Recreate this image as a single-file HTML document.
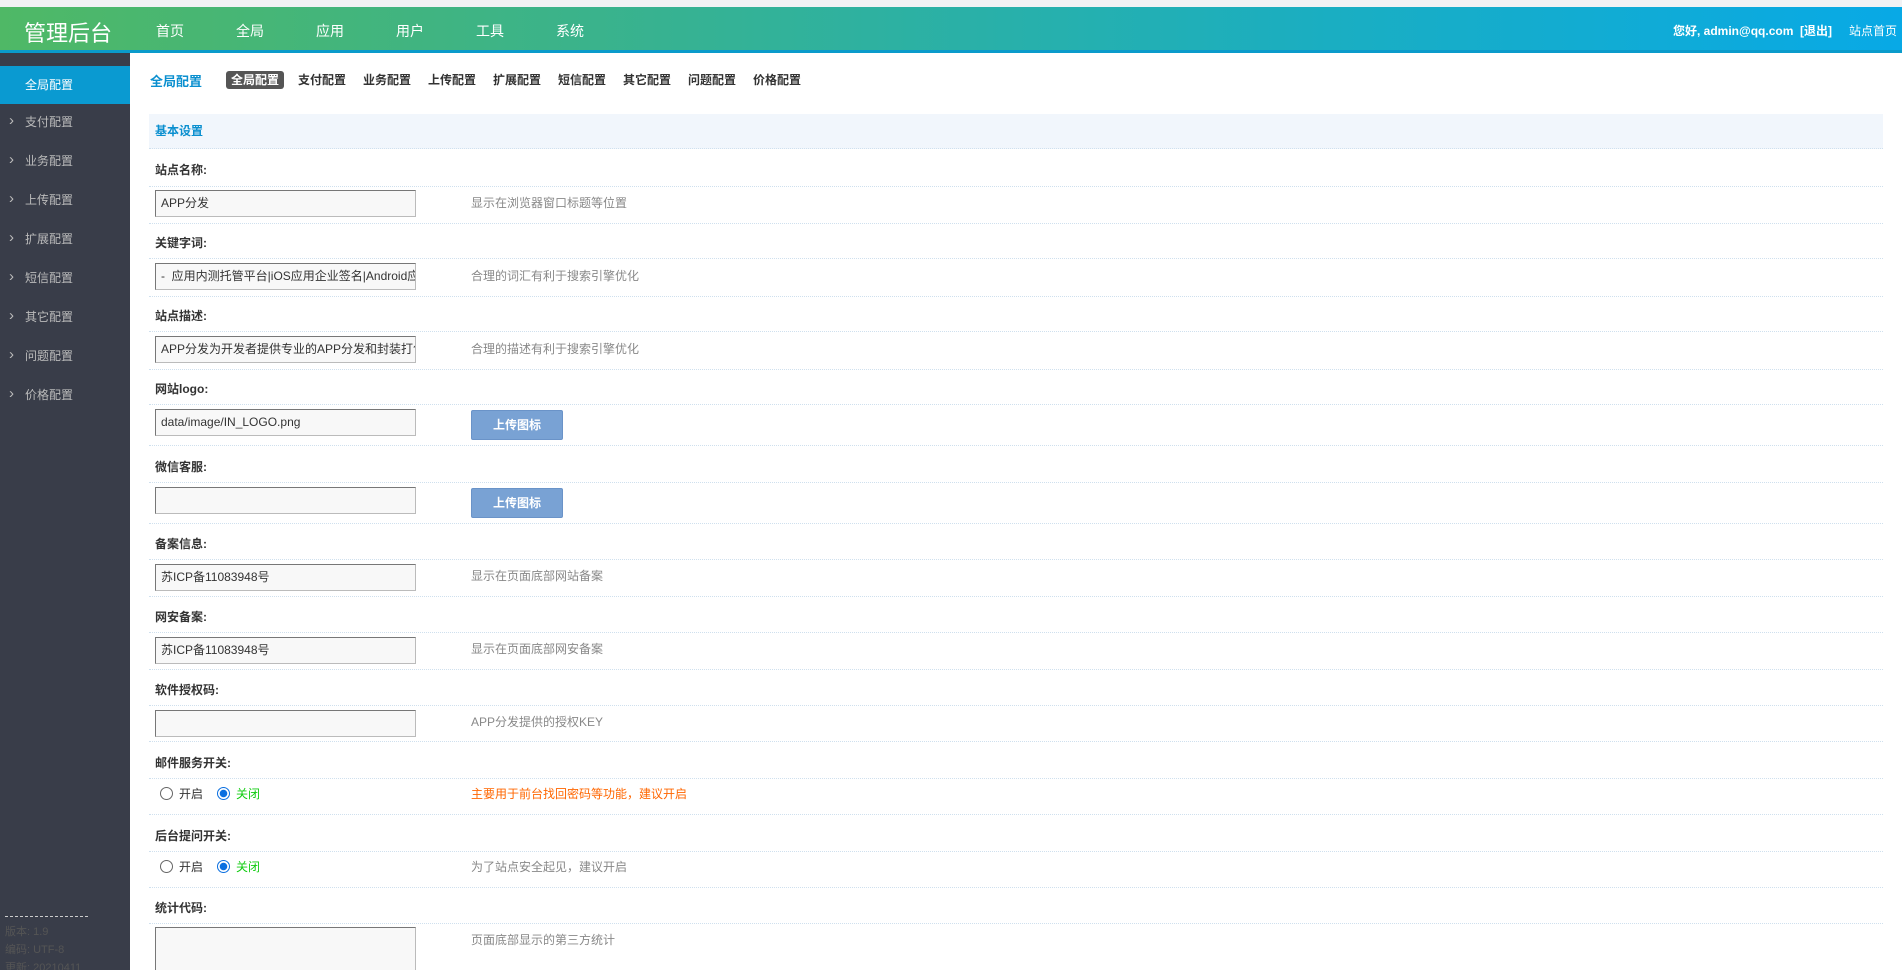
<!DOCTYPE html>
<html><head><meta charset="utf-8"><style>
*{margin:0;padding:0;box-sizing:border-box}
html{width:1902px;height:970px;overflow:hidden}
body{width:1902px;height:970px;overflow:hidden;background:#fff;font-family:"Liberation Sans","Noto Sans CJK SC",sans-serif;position:relative}
.a{position:absolute}
#top{left:0;top:0;width:1902px;height:7px;background:#f1f2f4}
#hdr{left:0;top:7px;width:1902px;height:46px;background:linear-gradient(90deg,#4fb866 0%,#3bb38a 30%,#1aaec2 70%,#08a9e6 100%);border-bottom:3px solid #0a9bcb}
#hdr .logo{position:absolute;left:24px;top:9px;font-size:22px;color:#fff}
#hdr .nav{position:absolute;top:14px;font-size:14px;color:#fff}
#hdr .r{position:absolute;top:15px;font-size:12px;color:#fff;font-weight:bold}
#side{left:0;top:53px;width:130px;height:917px;background:#393d49;overflow:hidden}
.si{position:absolute;left:0;width:130px;height:38px;line-height:38px;font-size:12px;color:#bbb;padding-left:25px}
.si i{position:absolute;left:9px;top:-1px;font-style:normal;color:#bbb;font-size:15px}
.act{background:#0a9ad1;color:#fff}
.ft{position:absolute;left:5px;font-size:11px;color:#555}
.tab{position:absolute;top:71px;font-size:12px;font-weight:bold;color:#333;height:18px;line-height:18px}
.lbl{position:absolute;left:155px;font-size:12px;font-weight:bold;color:#333}
.sep{position:absolute;left:149px;width:1734px;border-top:1px dotted #cfe0ee}
.inp{position:absolute;left:155px;width:261px;height:27px;background:#f8f8f8;border:1px solid #bbb;border-top-color:#777;border-left-color:#777;font-size:12px;color:#333;padding-left:5px;line-height:25px;white-space:nowrap;overflow:hidden}
.hint{position:absolute;left:471px;font-size:12px;color:#888}
.btn{position:absolute;left:471px;width:92px;height:30px;background:#79a2d4;border:1px solid #6a93c8;border-radius:2px;color:#fff;font-size:12px;font-weight:bold;text-align:center;line-height:28px}
.rad{position:absolute;font-size:12px;color:#333}
.rad span{display:inline-block;width:13px;height:13px;border-radius:50%;border:1px solid #666;vertical-align:-2px;margin-right:6px}
.rad .on{border:1px solid #0a6fe0;background:radial-gradient(circle,#0a6fe0 0 3.5px,#fff 4px)}
</style></head><body>
<div id="top" class="a"></div>
<div id="hdr" class="a">
<div class="logo">管理后台</div>
<div class="nav" style="left:156px">首页</div>
<div class="nav" style="left:236px">全局</div>
<div class="nav" style="left:316px">应用</div>
<div class="nav" style="left:396px">用户</div>
<div class="nav" style="left:476px">工具</div>
<div class="nav" style="left:556px">系统</div>
<div class="r" style="left:1673px">您好, admin@qq.com &nbsp;[退出]</div>
<div class="r" style="left:1849px;font-weight:normal">站点首页</div>
</div>
<div id="side" class="a">
<div class="si act" style="top:13px">全局配置</div>
<div class="si" style="top:50px"><i>›</i>支付配置</div>
<div class="si" style="top:89px"><i>›</i>业务配置</div>
<div class="si" style="top:128px"><i>›</i>上传配置</div>
<div class="si" style="top:167px"><i>›</i>扩展配置</div>
<div class="si" style="top:206px"><i>›</i>短信配置</div>
<div class="si" style="top:245px"><i>›</i>其它配置</div>
<div class="si" style="top:284px"><i>›</i>问题配置</div>
<div class="si" style="top:323px"><i>›</i>价格配置</div>
<div class="a" style="left:5px;top:863px;width:83px;border-top:1px dashed #ccc"></div>
<div class="ft" style="top:870px">版本: 1.9</div>
<div class="ft" style="top:888px">编码: UTF-8</div>
<div class="ft" style="top:906px">更新: 20210411</div>
</div>
<div class="a" style="left:150px;top:71px;font-size:13px;color:#0a8fcf;font-weight:bold">全局配置</div>
<div class="tab" style="left:226px;background:#555;color:#fff;border-radius:3px;padding:0 5px">全局配置</div>
<div class="tab" style="left:298px">支付配置</div>
<div class="tab" style="left:363px">业务配置</div>
<div class="tab" style="left:428px">上传配置</div>
<div class="tab" style="left:493px">扩展配置</div>
<div class="tab" style="left:558px">短信配置</div>
<div class="tab" style="left:623px">其它配置</div>
<div class="tab" style="left:688px">问题配置</div>
<div class="tab" style="left:753px">价格配置</div>
<div class="a" style="left:149px;top:114px;width:1734px;height:35px;background:#f1f6fc;border-bottom:1px dotted #cfe0ee;font-size:12px;color:#0a8fcf;font-weight:bold;line-height:35px;padding-left:6px">基本设置</div>

<div class="lbl" style="top:161px">站点名称:</div><div class="sep" style="top:186px"></div>
<div class="inp" style="top:190px">APP分发</div><div class="hint" style="top:194px">显示在浏览器窗口标题等位置</div><div class="sep" style="top:223px"></div>
<div class="lbl" style="top:234px">关键字词:</div><div class="sep" style="top:258px"></div>
<div class="inp" style="top:263px">- &nbsp;应用内测托管平台|iOS应用企业签名|Android应用</div><div class="hint" style="top:267px">合理的词汇有利于搜索引擎优化</div><div class="sep" style="top:296px"></div>
<div class="lbl" style="top:307px">站点描述:</div><div class="sep" style="top:331px"></div>
<div class="inp" style="top:336px">APP分发为开发者提供专业的APP分发和封装打包</div><div class="hint" style="top:340px">合理的描述有利于搜索引擎优化</div><div class="sep" style="top:369px"></div>
<div class="lbl" style="top:380px">网站logo:</div><div class="sep" style="top:404px"></div>
<div class="inp" style="top:409px">data/image/IN_LOGO.png</div><div class="btn" style="top:410px">上传图标</div><div class="sep" style="top:445px"></div>
<div class="lbl" style="top:458px">微信客服:</div><div class="sep" style="top:482px"></div>
<div class="inp" style="top:487px"></div><div class="btn" style="top:488px">上传图标</div><div class="sep" style="top:523px"></div>
<div class="lbl" style="top:535px">备案信息:</div><div class="sep" style="top:559px"></div>
<div class="inp" style="top:564px">苏ICP备11083948号</div><div class="hint" style="top:567px">显示在页面底部网站备案</div><div class="sep" style="top:596px"></div>
<div class="lbl" style="top:608px">网安备案:</div><div class="sep" style="top:632px"></div>
<div class="inp" style="top:637px">苏ICP备11083948号</div><div class="hint" style="top:640px">显示在页面底部网安备案</div><div class="sep" style="top:669px"></div>
<div class="lbl" style="top:681px">软件授权码:</div><div class="sep" style="top:705px"></div>
<div class="inp" style="top:710px"></div><div class="hint" style="top:713px">APP分发提供的授权KEY</div><div class="sep" style="top:741px"></div>
<div class="lbl" style="top:754px">邮件服务开关:</div><div class="sep" style="top:778px"></div>
<div class="rad" style="left:160px;top:785px"><span></span>开启</div><div class="rad" style="left:217px;top:785px;color:#1c1"><span class="on"></span>关闭</div>
<div class="hint" style="top:785px;color:#f60">主要用于前台找回密码等功能，建议开启</div><div class="sep" style="top:814px"></div>
<div class="lbl" style="top:827px">后台提问开关:</div><div class="sep" style="top:851px"></div>
<div class="rad" style="left:160px;top:858px"><span></span>开启</div><div class="rad" style="left:217px;top:858px;color:#1c1"><span class="on"></span>关闭</div>
<div class="hint" style="top:858px">为了站点安全起见，建议开启</div><div class="sep" style="top:887px"></div>
<div class="lbl" style="top:899px">统计代码:</div><div class="sep" style="top:923px"></div>
<div class="inp" style="top:927px;height:43px;border-bottom:none"></div><div class="hint" style="top:931px">页面底部显示的第三方统计</div>
</body></html>
